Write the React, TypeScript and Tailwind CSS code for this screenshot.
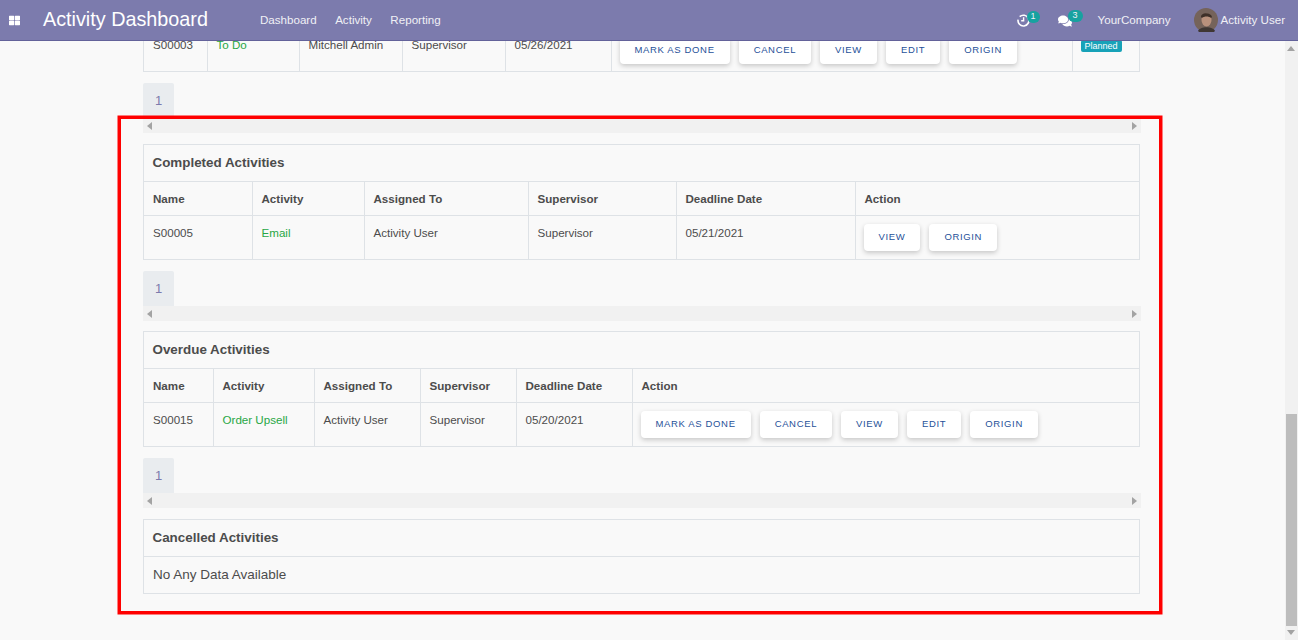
import { FaComments, FaThLarge } from "react-icons/fa";

const font = "font-['Liberation_Sans',Arial,sans-serif]";

const allActions = ["Mark as done", "Cancel", "View", "Edit", "Origin"];

const ActionButton = ({ label }: { label: string }) => (
  <button className="h-[27px] shrink-0 rounded-[4px] bg-white px-[15px] text-[9.5px] uppercase tracking-[0.65px] text-[#1f5199] shadow-[0_2px_5px_rgba(0,0,0,0.2)]">
    {label}
  </button>
);

const Cell = ({ children, className = "" }: { children?: React.ReactNode; className?: string }) => (
  <td className={`border border-[#dee2e6] px-[9px] align-top ${className}`}>{children}</td>
);

const HeadCell = ({ children, className = "" }: { children?: React.ReactNode; className?: string }) => (
  <th className={`h-[33px] border border-[#dee2e6] px-[9px] pt-[1px] text-left font-bold ${className}`}>{children}</th>
);

const Pager = () => (
  <div className="mt-[11px] flex h-[35px] w-[31px] items-center justify-center rounded-t-[2px] bg-[#e9ecef] text-[13px] text-[#7c7bad]">
    1
  </div>
);

const HScroll = () => (
  <div className="flex h-[15px] w-[998px] items-center justify-between bg-[#f1f1f1] px-[4px]">
    <span className="h-0 w-0 border-y-[4px] border-r-[5px] border-y-transparent border-r-[#a3a3a3]" />
    <span className="h-0 w-0 border-y-[4px] border-l-[5px] border-y-transparent border-l-[#a3a3a3]" />
  </div>
);

type SectionProps = {
  title: string;
  widths: string[];
  row: string[];
  actions: string[];
};

const Section = ({ title, widths, row, actions }: SectionProps) => (
  <div className="border border-[#dee2e6]">
    <div className="flex h-[37px] items-center border-b border-[#dee2e6] px-[8.5px] text-[13.4px] font-bold">{title}</div>
    <table className="w-full table-fixed border-collapse border-hidden">
      <thead>
        <tr>
          {["Name", "Activity", "Assigned To", "Supervisor", "Deadline Date"].map((h, i) => (
            <HeadCell key={h} className={widths[i]}>{h}</HeadCell>
          ))}
          <HeadCell>Action</HeadCell>
        </tr>
      </thead>
      <tbody>
        <tr className="h-[44px]">
          {row.map((v, i) => (
            <Cell key={v} className={i === 1 ? "pt-[8px] text-[#28a745]" : "pt-[8px]"}>{v}</Cell>
          ))}
          <td className="border border-[#dee2e6] px-[8px] align-middle">
            <div className="flex gap-[9px]">
              {actions.map((a) => <ActionButton key={a} label={a} />)}
            </div>
          </td>
        </tr>
      </tbody>
    </table>
  </div>
);

export default function App() {
  return (
    <div className={`${font} relative flex h-[640px] w-[1298px] flex-col overflow-hidden bg-[#f9f9f9] text-[11.6px] text-[#4c4c4c]`}>
      <nav className="z-10 flex h-[41px] shrink-0 items-center border-b border-[#63629a] bg-[#7c7bad] text-[#f0f0f5]">
        <FaThLarge className="ml-[9px] text-[11px] text-white" />
        <span className="ml-[23px] text-[19.8px] text-white">Activity Dashboard</span>
        <div className="ml-[52px] flex gap-[18.5px] text-[11.6px]">
          <span>Dashboard</span>
          <span>Activity</span>
          <span>Reporting</span>
        </div>
        <div className="ml-auto flex items-center pr-[13px] text-[11.6px]">
          <div className="relative mr-[28px] mt-[1px]">
            <svg width="13" height="13" viewBox="0 0 13 13" fill="none" stroke="#fff" className="block">
              <path d="M2.7 2.7A5.4 5.4 0 1 1 1.1 5.6" strokeWidth="1.6" />
              <path d="M6.6 3.2v3.6H4.2" strokeWidth="1.4" />
            </svg>
            <span className="absolute left-[10px] top-[-3px] flex h-[12px] w-[13px] items-center justify-center rounded-full bg-[#17a2a0] text-[9px]">1</span>
          </div>
          <div className="relative mr-[26px] mt-[1px]">
            <FaComments className="block text-[14px] text-white" />
            <span className="absolute left-[10px] top-[-4px] flex h-[12px] w-[15px] items-center justify-center rounded-full bg-[#17a2a0] text-[9px]">3</span>
          </div>
          <span>YourCompany</span>
          <svg width="24" height="24" viewBox="0 0 24 24" className="ml-[23px] mr-[3px]">
            <circle cx="12" cy="12" r="12" fill="#75635a" />
            <ellipse cx="12.5" cy="12" rx="5" ry="6.5" fill="#b9917c" />
            <path d="M7 9c0-5 10-5 11 0l-1 1c-2-2-7-2-9 0z" fill="#3e3028" />
            <path d="M4 23c2-5 15-5 17 0a12 12 0 0 1-17 0z" fill="#3f3733" />
          </svg>
          <span>Activity User</span>
        </div>
      </nav>

      <main className="ml-[143px] w-[998px] -mt-[15px]">
        <div className="w-[997px] border border-[#dee2e6]">
          <table className="w-full table-fixed border-collapse border-hidden">
            <tbody>
              <tr className="h-[44px]">
                <Cell className="w-[63px] pt-[9px]">S00003</Cell>
                <Cell className="w-[92px] pt-[9px] text-[#28a745]">To Do</Cell>
                <Cell className="w-[103px] pt-[9px]">Mitchell Admin</Cell>
                <Cell className="w-[103px] pt-[9px]">Supervisor</Cell>
                <Cell className="w-[106px] pt-[9px]">05/26/2021</Cell>
                <td className="border border-[#dee2e6] px-[8px] pt-[2px] align-middle">
                  <div className="flex gap-[9px]">
                    {allActions.map((a) => <ActionButton key={a} label={a} />)}
                  </div>
                </td>
                <td className="w-[67px] border border-[#dee2e6] px-[8px] align-top">
                  <span className="mt-[13px] inline-block rounded-[2px] bg-[#17a2b8] px-[4px] text-[9px] leading-[12px] text-white">Planned</span>
                </td>
              </tr>
            </tbody>
          </table>
        </div>
        <Pager />
        <HScroll />

        <div className="mt-[11px] w-[997px]">
          <Section
            title="Completed Activities"
            widths={["w-[108px]", "w-[112px]", "w-[164px]", "w-[148px]", "w-[179px]"]}
            row={["S00005", "Email", "Activity User", "Supervisor", "05/21/2021"]}
            actions={["View", "Origin"]}
          />
        </div>
        <Pager />
        <HScroll />

        <div className="mt-[10px] w-[997px]">
          <Section
            title="Overdue Activities"
            widths={["w-[69px]", "w-[101px]", "w-[106px]", "w-[96px]", "w-[116px]"]}
            row={["S00015", "Order Upsell", "Activity User", "Supervisor", "05/20/2021"]}
            actions={allActions}
          />
        </div>
        <Pager />
        <HScroll />

        <div className="mt-[11px] w-[997px] border border-[#dee2e6]">
          <div className="flex h-[36px] items-center px-[8.5px] text-[13.4px] font-bold">Cancelled Activities</div>
          <div className="flex h-[37px] items-center border-t border-[#dee2e6] px-[9px] text-[13.5px]">No Any Data Available</div>
        </div>
      </main>

      {/* page scrollbar */}
      <div className="absolute bottom-0 right-0 top-[41px] w-[13px] bg-[#f1f1f1]">
        <span className="absolute left-[2px] top-[5px] h-0 w-0 border-x-[4px] border-b-[5px] border-x-transparent border-b-[#a3a3a3]" />
        <div className="absolute left-[1px] top-[373px] h-[212px] w-[11px] bg-[#bdbdbd]" />
        <span className="absolute bottom-[5px] left-[2px] h-0 w-0 border-x-[4px] border-t-[5px] border-x-transparent border-t-[#a3a3a3]" />
      </div>

      {/* red annotation frame from the screenshot */}
      <div className="pointer-events-none absolute left-[118px] top-[116px] h-[498px] w-[1044px] border-[3px] border-[#ff0000] shadow-[0_0_0_0.5px_#ff0000]" />
    </div>
  );
}
